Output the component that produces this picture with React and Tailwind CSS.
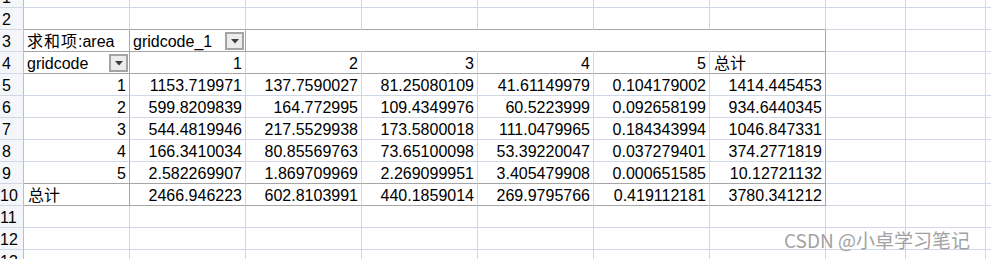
import React from "react";

const W = {
  n: "w-[24px]",
  A: "w-[106px]",
  B: "w-[116px]",
  C: "w-[116px]",
  D: "w-[116px]",
  E: "w-[116px]",
  F: "w-[116px]",
  G: "w-[116px]",
  H: "w-[80px]",
  I: "w-[80px]",
};

const RB = {
  light: "border-r-[#d0d7e5]",
  dark: "border-r-[#a6a6a6]",
  none: "border-r-white",
};
const BB = {
  light: "border-b-[#d0d7e5]",
  dark: "border-b-[#a6a6a6]",
};

const Drop = () => (
  <span className="mb-[1px] mr-[1px] flex h-[18px] w-[19px] shrink-0 items-center justify-center border-2 border-[#a3a3a3] bg-[#ececec]">
    <svg width="8" height="5" viewBox="0 0 8 5">
      <polygon points="0,0 8,0 4,4.5" fill="#3c3c3c" />
    </svg>
  </span>
);

const Cell = ({ w, r = "light", b = "light", right, children }) => (
  <div
    className={`flex h-full shrink-0 items-end border-r border-b ${W[w]} ${RB[r]} ${BB[b]} ${
      right ? "justify-end pr-[3px]" : "justify-between pl-[3px]"
    }`}
  >
    {children}
  </div>
);

const RowNum = ({ n }) => (
  <div
    className={`flex h-full w-[24px] shrink-0 items-end border-r border-b border-r-[#b4bfd0] border-b-[#d0d7e5] bg-[#f4f6fa] ${
      n > 9 ? "pl-0" : "pl-[2px]"
    }`}
  >
    <span className="leading-[18px]">{n}</span>
  </div>
);

const Row = ({ h = "h-[22px]", children }) => (
  <div className={`flex ${h} shrink-0`}>
    {children}
    <div className="h-full flex-1 border-b border-b-[#d0d7e5]" />
  </div>
);

const T = ({ children }) => <span className="leading-[18px] whitespace-nowrap">{children}</span>;

const EmptyRow = ({ n, h, bottomDark }) => (
  <Row h={h}>
    <RowNum n={n} />
    {["A", "B", "C", "D", "E", "F", "G"].map((c) => (
      <Cell key={c} w={c} b={bottomDark ? "dark" : "light"} />
    ))}
    <Cell w="H" />
    <Cell w="I" />
  </Row>
);

const data = [
  [1, "1153.719971", "137.7590027", "81.25080109", "41.61149979", "0.104179002", "1414.445453"],
  [2, "599.8209839", "164.772995", "109.4349976", "60.5223999", "0.092658199", "934.6440345"],
  [3, "544.4819946", "217.5529938", "173.5800018", "111.0479965", "0.184343994", "1046.847331"],
  [4, "166.3410034", "80.85569763", "73.65100098", "53.39220047", "0.037279401", "374.2771819"],
  [5, "2.582269907", "1.869709969", "2.269099951", "3.405479908", "0.000651585", "10.12721132"],
];
const totals = ["2466.946223", "602.8103991", "440.1859014", "269.9795766", "0.419112181", "3780.341212"];

export default function App() {
  return (
    <div className="relative h-[259px] w-[991px] overflow-hidden bg-white font-['Liberation_Sans','Noto_Sans_CJK_SC',sans-serif] text-[16px] text-black">
      <div className="flex flex-col">
        <EmptyRow n={1} h="h-[8px]" />
        <EmptyRow n={2} bottomDark />

        {/* pivot header */}
        <Row>
          <RowNum n={3} />
          <Cell w="A" r="dark" b="dark">
            <T>
              <span className="tracking-[1px] font-['Noto_Sans_CJK_SC',sans-serif]">求和项</span>:area
            </T>
          </Cell>
          <Cell w="B" r="dark" b="dark">
            <T>gridcode_1</T>
            <Drop />
          </Cell>
          <Cell w="C" r="none" b="dark" />
          <Cell w="D" r="none" b="dark" />
          <Cell w="E" r="none" b="dark" />
          <Cell w="F" r="none" b="dark" />
          <Cell w="G" r="dark" b="dark" />
          <Cell w="H" />
          <Cell w="I" />
        </Row>

        <Row>
          <RowNum n={4} />
          <Cell w="A" r="dark" b="dark">
            <T>gridcode</T>
            <Drop />
          </Cell>
          {["B", "C", "D", "E", "F"].map((c, i) => (
            <Cell key={c} w={c} b="dark" right>
              <T>{i + 1}</T>
            </Cell>
          ))}
          <Cell w="G" r="dark" b="dark">
            <T>
              <span className="pl-[1px] font-['Noto_Sans_CJK_SC',sans-serif]">总计</span>
            </T>
          </Cell>
          <Cell w="H" />
          <Cell w="I" />
        </Row>

        {data.map((row, idx) => {
          const last = idx === data.length - 1;
          const b = last ? "dark" : "light";
          return (
            <Row key={row[0]}>
              <RowNum n={idx + 5} />
              <Cell w="A" r="dark" b={b} right>
                <T>{row[0]}</T>
              </Cell>
              {["B", "C", "D", "E", "F"].map((c, i) => (
                <Cell key={c} w={c} b={b} right>
                  <T>{row[i + 1]}</T>
                </Cell>
              ))}
              <Cell w="G" r="dark" b={b} right>
                <T>{row[6]}</T>
              </Cell>
              <Cell w="H" />
              <Cell w="I" />
            </Row>
          );
        })}

        <Row>
          <RowNum n={10} />
          <Cell w="A" r="dark" b="dark">
            <T>
              <span className="pl-[1px] font-['Noto_Sans_CJK_SC',sans-serif]">总计</span>
            </T>
          </Cell>
          {["B", "C", "D", "E", "F"].map((c, i) => (
            <Cell key={c} w={c} b="dark" right>
              <T>{totals[i]}</T>
            </Cell>
          ))}
          <Cell w="G" r="dark" b="dark" right>
            <T>{totals[5]}</T>
          </Cell>
          <Cell w="H" />
          <Cell w="I" />
        </Row>

        <EmptyRow n={11} />
        <EmptyRow n={12} />
        <EmptyRow n={13} />
      </div>

      {/* watermark */}
      <div className="absolute left-[784px] top-[227px] whitespace-nowrap font-['Noto_Sans_CJK_SC',sans-serif] text-[19px] leading-[26px] text-[#8c8c8c] opacity-80">
        CSDN @小卓学习笔记
      </div>
    </div>
  );
}
